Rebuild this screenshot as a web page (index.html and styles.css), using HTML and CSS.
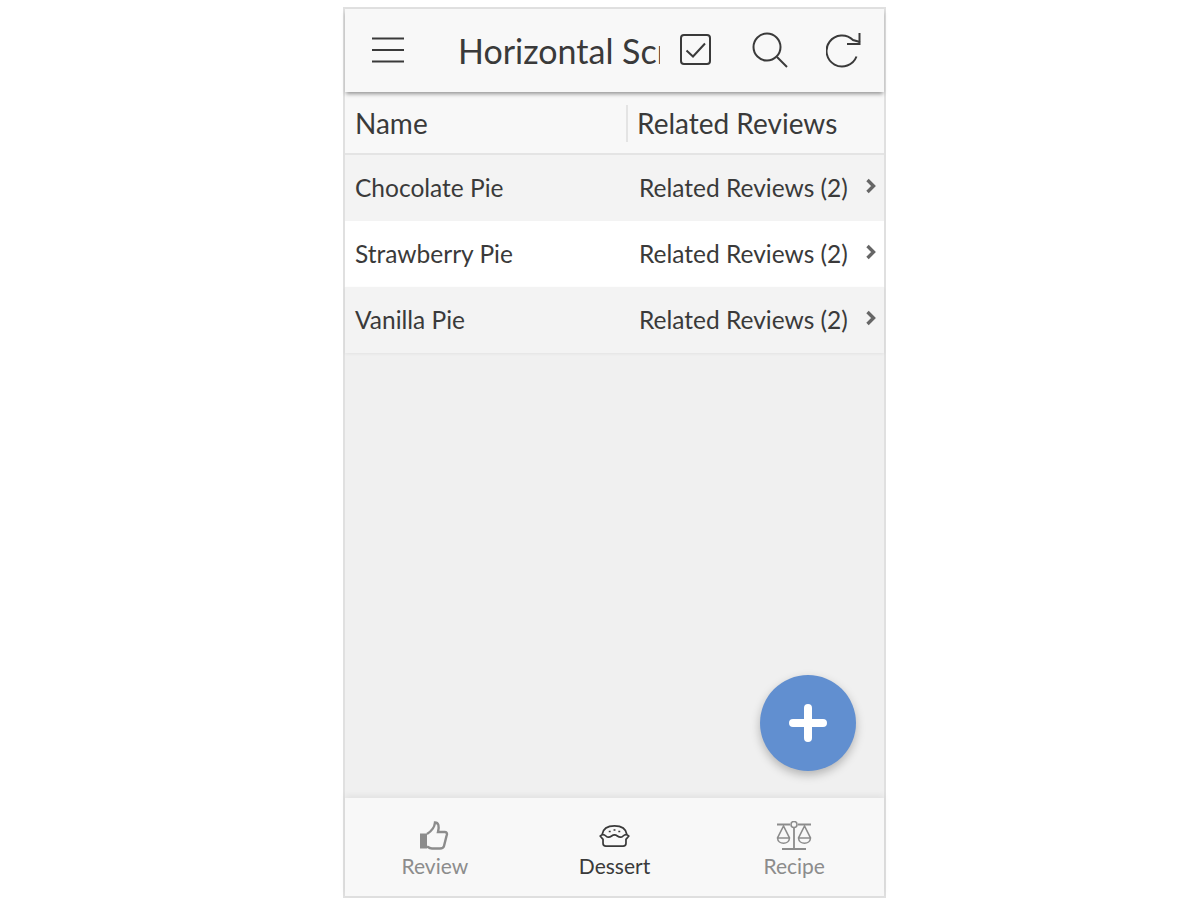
FILE: index.html
```html
<!DOCTYPE html>
<html lang="en">
<head>
    <meta charset="UTF-8">
    <meta name="viewport" content="width=device-width, initial-scale=1.0">
    <title>Horizontal Scroll</title>
    <link rel="stylesheet" href="styles.css">
</head>
<body>

<div class="phone">
    <div class="topbar">
        <button class="icon-btn menu-btn">
            <svg width="32" height="26" viewBox="0 0 32 26"><path d="M0 1.5H32M0 13H32M0 24.5H32" fill="none" stroke="#3a3a3a" stroke-width="2.2"/></svg>
        </button>
        <div class="title">Horizontal Scroll</div>
        <div class="actions">
            <svg width="32" height="32" viewBox="0 0 32 32"><rect x="1" y="1" width="29" height="29" rx="3" fill="none" stroke="#3a3a3a" stroke-width="2"/><path d="M6.5 16.5L13 22.5L25 9.5" fill="none" stroke="#3a3a3a" stroke-width="2"/></svg>
            <svg class="search" width="36" height="36" viewBox="0 0 36 36"><circle cx="15" cy="15" r="13.5" fill="none" stroke="#3a3a3a" stroke-width="2"/><path d="M25 25L35 35" fill="none" stroke="#3a3a3a" stroke-width="2"/></svg>
            <svg width="36" height="36" viewBox="0 0 36 36"><path d="M30.5 24.5A15.5 15.5 0 1 1 27 8L34 10" fill="none" stroke="#3a3a3a" stroke-width="2"/><path d="M33.5 1V12H21" fill="none" stroke="#3a3a3a" stroke-width="2"/></svg>
        </div>
    </div>

    <div class="table-head">
        <div class="col-name">Name</div>
        <div class="col-related">Related Reviews</div>
    </div>

    <div class="row odd">
        <div class="col-name">Chocolate Pie</div>
        <div class="col-link">Related Reviews (2)</div>
        <svg class="chevron" width="12" height="16" viewBox="0 0 12 16"><path d="M2.500 2L8.500 8L2.500 14" fill="none" stroke="#666" stroke-width="3.400"/></svg>
    </div>
    <div class="row">
        <div class="col-name">Strawberry Pie</div>
        <div class="col-link">Related Reviews (2)</div>
        <svg class="chevron" width="12" height="16" viewBox="0 0 12 16"><path d="M2.500 2L8.500 8L2.500 14" fill="none" stroke="#666" stroke-width="3.400"/></svg>
    </div>
    <div class="row odd last">
        <div class="col-name">Vanilla Pie</div>
        <div class="col-link">Related Reviews (2)</div>
        <svg class="chevron" width="12" height="16" viewBox="0 0 12 16"><path d="M2.500 2L8.500 8L2.500 14" fill="none" stroke="#666" stroke-width="3.400"/></svg>
    </div>

    <div class="content"></div>

    <div class="fab">
        <svg width="38" height="38" viewBox="0 0 38 38"><path d="M19 4V34M4 19H34" fill="none" stroke="#fff" stroke-width="8" stroke-linecap="round"/></svg>
    </div>

    <div class="tabs">
        <div class="tab">
            <svg width="30" height="30" viewBox="0 0 30 30"><path d="M0 12.500H7V27.500H0Z" fill="#8c8c8c"/><path d="M7 13C11 10.500 14.500 7 15 1.500C18.500 1.500 19.500 5 18 11H25C27 11 27.500 13 26.500 15L24 25C23.500 27 22 27.500 20 27.500H12C10 27.500 8.500 26.500 7 25.500" fill="none" stroke="#8c8c8c" stroke-width="2.400"/></svg>
            <span>Review</span>
        </div>
        <div class="tab active">
            <svg class="pie" width="31" height="22" viewBox="0 0 32 23"><path d="M3 10C4 4 9 1 16 1C23 1 28 4 29 10" fill="none" stroke="#3a3a3a" stroke-width="1.800"/><path d="M1 11.500C3 9.500 5 9.500 7 11.500C9 13.500 11 13 13 11.500C15 10 17 10 19 11.500C21 13 23 13.500 25 11.500C27 9.500 29 9.500 31 11.500L28 15V19C28 21 27 22 25 22H7C5 22 4 21 4 19V15Z" fill="none" stroke="#3a3a3a" stroke-width="1.800" stroke-linejoin="round"/><path d="M11 6V7.500M16 4.500V6M21 6V7.500" fill="none" stroke="#3a3a3a" stroke-width="2"/></svg>
            <span>Dessert</span>
        </div>
        <div class="tab">
            <svg width="36" height="30" viewBox="0 0 36 30"><path d="M1 3.500H14M22 3.500H35M18 6.500V27M6 28H30" fill="none" stroke="#8c8c8c" stroke-width="1.800"/><circle cx="18" cy="3.500" r="3" fill="none" stroke="#8c8c8c" stroke-width="1.600"/><path d="M7.500 5L1.500 17C2 24 13 24 13.500 17ZM1.500 17H13.500M28.500 5L22.500 17C23 24 34 24 34.500 17ZM22.500 17H34.500" fill="none" stroke="#8c8c8c" stroke-width="1.600"/></svg>
            <span>Recipe</span>
        </div>
    </div>
</div>

</body>
</html>
```
FILE: styles.css
```css
body {
    margin: 0;
    background-color: #fff;
    font-family: "Lato", "Liberation Sans", sans-serif;
    color: #3a3a3a;
}
.phone {
    position: relative;
    box-sizing: border-box;
    width: 543px;
    height: 891px;
    margin: 7px 0 0 343px;
    border: 2px solid #e0e0e0;
    background-color: #f0f0f0;
    display: flex;
    flex-direction: column;
}
.topbar {
    flex: none;
    height: 83px;
    background-color: #f8f8f8;
    display: flex;
    align-items: center;
    box-shadow: 0 3px 4px -1px rgba(0, 0, 0, 0.4);
    position: relative;
    z-index: 2;
}
.icon-btn {
    border: none;
    background: none;
    padding: 0;
    display: flex;
}
.menu-btn {
    margin: 0 54px 0 27px;
    position: relative;
    top: -1px;
}
.title {
    width: 202px;
    overflow: hidden;
    white-space: nowrap;
    font-size: 34px;
}
.actions {
    display: flex;
    align-items: center;
    gap: 39px;
    margin-left: 20px;
    position: relative;
    top: -1px;
}
.search {
    margin: 0 -1px 0 1px;
}
.table-head {
    flex: none;
    height: 63px;
    box-sizing: border-box;
    padding: 1px 0 0 10px;
    background-color: #f8f8f8;
    border-bottom: 2px solid #e4e4e4;
    display: flex;
    align-items: center;
    font-size: 28px;
}
.table-head .col-name {
    width: 271px;
}
.col-related {
    height: 37px;
    line-height: 37px;
    border-left: 2px solid #e4e4e4;
    padding-left: 9px;
}
.row {
    flex: none;
    height: 66px;
    box-sizing: border-box;
    padding: 0 0 2px 10px;
    background-color: #fff;
    display: flex;
    align-items: center;
    font-size: 24.5px;
}
.row.odd {
    background-color: #f3f3f3;
}
.row.last {
    box-shadow: 0 1px 3px rgba(0, 0, 0, 0.06);
}
.row .col-name {
    width: 284px;
}
.col-link {
    width: 226px;
}
.chevron {
    position: relative;
    top: -1px;
}
.content {
    flex: 1;
}
.fab {
    position: absolute;
    right: 28px;
    bottom: 125px;
    width: 96px;
    height: 96px;
    border-radius: 50%;
    background-color: #618fd0;
    display: flex;
    align-items: center;
    justify-content: center;
    box-shadow: 0 4px 10px rgba(0, 0, 0, 0.25);
}
.tabs {
    flex: none;
    height: 98px;
    background-color: #f8f8f8;
    display: flex;
    box-shadow: 0 -3px 6px rgba(0, 0, 0, 0.06);
    position: relative;
}
.tab {
    flex: 1;
    display: flex;
    flex-direction: column;
    align-items: center;
    justify-content: flex-end;
    height: 82px;
    font-size: 21px;
    color: #8c8c8c;
}
.tab svg {
    margin-bottom: 1px;
}
.tab .pie {
    margin-bottom: 5px;
}
.tab span {
    line-height: 28px;
}
.tab.active {
    color: #3a3a3a;
}
```
